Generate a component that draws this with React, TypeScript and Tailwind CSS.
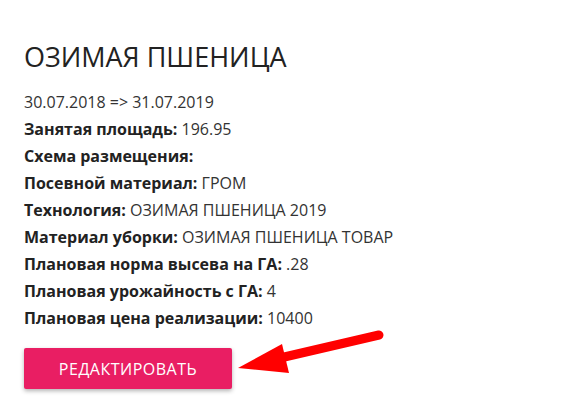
export default function App() {
  const rows: [string, string][] = [
    ['Занятая площадь:', '196.95'],
    ['Схема размещения:', ''],
    ['Посевной материал:', 'ГРОМ'],
    ['Технология:', 'ОЗИМАЯ ПШЕНИЦА 2019'],
    ['Материал уборки:', 'ОЗИМАЯ ПШЕНИЦА ТОВАР'],
    ['Плановая норма высева на ГА:', '.28'],
    ['Плановая урожайность с ГА:', '4'],
    ['Плановая цена реализации:', '10400'],
  ];

  return (
    <div className="w-[588px] h-[414px] bg-white overflow-hidden relative font-['Open_Sans',sans-serif] text-[#333]">
      <div className="pl-6 pt-[40px]">
        <h1 className="text-[27px] leading-[34px] font-normal text-[#222]">ОЗИМАЯ ПШЕНИЦА</h1>
        <div className="mt-[15px] text-[16px] leading-[27px]">
          <p>30.07.2018 =&gt; 31.07.2019</p>
          {rows.map(([label, value]) => (
            <p key={label}>
              <span className="font-bold text-[#222]">{label}</span> {value}
            </p>
          ))}
        </div>
        <button className="mt-[16px] w-[208px] h-[41px] rounded-[2px] bg-[#e91e63] text-white text-[16px] shadow-[0_2px_4px_rgba(0,0,0,0.3)] tracking-[0.5px]">
          РЕДАКТИРОВАТЬ
        </button>
      </div>

      {/* annotation arrow */}
      <svg className="absolute left-0 top-0" width="588" height="414" viewBox="0 0 588 414">
        <line x1="379" y1="335" x2="280" y2="358" stroke="#ff0000" strokeWidth="9" strokeLinecap="round" />
        <polygon points="238,368 282,344 289,373" fill="#ff0000" />
      </svg>
    </div>
  );
}
